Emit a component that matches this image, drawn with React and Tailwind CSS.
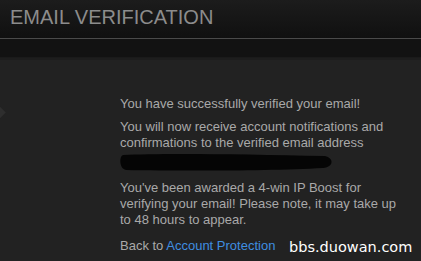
import React from 'react';

const App = () => {
    return (
        <div className="relative w-[421px] h-[261px] overflow-hidden bg-[#222222]" style={{ fontFamily: '"Liberation Sans", Arial, sans-serif' }}>
            {/* Header */}
            <div className="h-[38px] bg-gradient-to-b from-[#1c1c1c] to-[#101010] px-[10px] pt-[4px]">
                <h1 className="text-[20px] leading-[26px] text-[#8c8c8c]">EMAIL VERIFICATION</h1>
            </div>
            <div className="h-px bg-[#4a4a4a]" />
            <div className="h-[19px] bg-[#121212] border-b border-[#1a1a1a]" />
            <div className="h-[2px] bg-[#1d1d1d]" />

            {/* Side nub */}
            <div className="absolute left-[-5px] top-[108px] w-[9px] h-[9px] rotate-45 bg-[#2e2e2e]" />

            {/* Body */}
            <div className="ml-[120px] w-[282px] pt-[36px] text-[13px] leading-[16px] text-[#a9a9a9]">
                <p>You have successfully verified your email!</p>
                <p className="mt-[7px]">You will now receive account notifications and confirmations to the verified email address</p>
                <div className="h-[20px] pt-[2px]">
                    <svg width="215" height="18" viewBox="0 0 215 18">
                        <path d="M3 2 C 40 0, 120 1, 205 3 C 214 5, 214 14, 203 15 C 150 18, 60 18, 6 17 C -1 16, -1 3, 3 2 Z" fill="#050505" />
                    </svg>
                </div>
                <p className="mt-[9px]">You've been awarded a 4-win IP Boost for verifying your email! Please note, it may take up to 48 hours to appear.</p>
                <p className="mt-[10px]">Back to <span className="text-[#3f8ee0]">Account Protection</span></p>
            </div>

            {/* Watermark */}
            <div className="absolute left-[289px] top-[238px] text-[14.5px] leading-[18px] text-white" style={{ fontFamily: '"DejaVu Sans", sans-serif' }}>bbs.duowan.com</div>
        </div>
    );
};

export default App;
